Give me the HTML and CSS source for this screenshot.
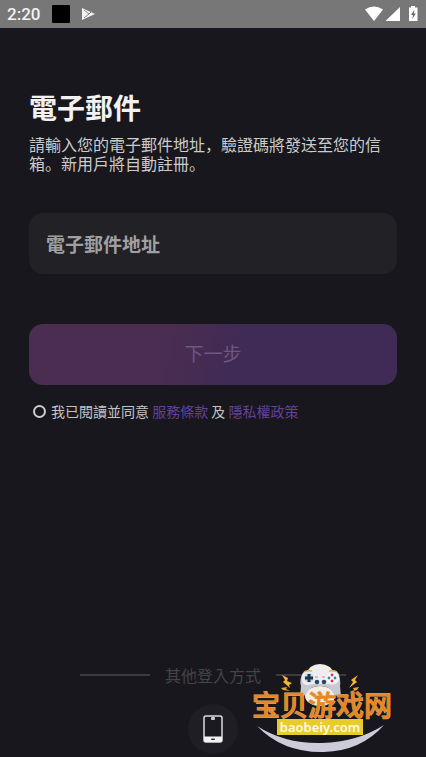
FILE: index.html
```html
<!DOCTYPE html>
<html lang="zh-Hant">
<head>
<meta charset="UTF-8" />
<meta name="viewport" content="width=device-width, initial-scale=1" />
<title>電子郵件</title>
<link rel="stylesheet" href="styles.css">
</head>
<body>

<div class="statusbar">
  <span class="time">2:20</span>
  <span class="app-square"></span>
  <svg class="play" width="14" height="14" viewBox="0 0 14 14">
    <path d="M1 1 L14 7 L1 13 Z" fill="#f2f2f2"/>
    <path d="M3 3 L8 7 L3 11 M8 7 L11 4" stroke="#888" stroke-width="1" fill="none"/>
  </svg>
  <svg class="signals" width="54" height="18" viewBox="0 0 54 18">
    <path d="M0 4.500 Q9 -1.500 18 4.500 L9 16 Z" fill="#fff"/>
    <path d="M35 2 V16 H20.500 Z" fill="#fff"/>
    <path d="M46 1 H50 V2.500 H52.500 V16 H44 V2.500 H46 Z" fill="#fff"/>
    <path d="M49.500 4.500 L46 10 H48 L47.300 14 L50.800 8.500 H48.700 Z" fill="#666"/>
  </svg>
</div>

<main class="content">
  <h1>電子郵件</h1>
  <p class="intro" lang="zh-Hans">請輸入您的電子郵件地址，驗證碼將發送至您的信<br>箱。新用戶將自動註冊。</p>

  <form class="login">
    <input class="email" type="email" placeholder="電子郵件地址" aria-label="電子郵件地址" />
    <button class="next" type="button">下一步</button>
    <div class="agree">
      <input type="radio" id="agree" />
      <label for="agree">我已閱讀並同意 <a href="#">服務條款</a> 及 <a href="#">隱私權政策</a></label>
    </div>
  </form>
</main>

<footer class="other">
  <div class="divider">其他登入方式</div>
  <button class="phone" type="button" aria-label="手機">
    <svg width="20" height="28" viewBox="0 0 20 28">
      <rect x="1" y="1" width="18" height="26" rx="2" fill="#1b1a20" stroke="#ddd" stroke-width="1.500"/>
      <path d="M1 21.500 H19 V25 Q19 27 17 27 H3 Q1 27 1 25 Z" fill="#f2f2f2"/>
      <rect x="8" y="2" width="4" height="3" rx="1" fill="#ccc"/>
      <rect x="8" y="23.500" width="4" height="1.500" rx="0.700" fill="#333"/>
    </svg>
  </button>
</footer>

<!-- logo -->
<svg class="logo" width="144" height="96" viewBox="0 0 144 96">
  <!-- gamepad -->
  <path d="M55 14 Q58 3 69 3 Q80 3 84 14 Z" fill="#efede9"/>
  <ellipse cx="69" cy="35" rx="15" ry="10" fill="#f3eee4"/>
  <path d="M52 12 Q56 8 61 11 H78 Q83 8 87 12 Q90 18 89 25 L90 36 Q84 36 80 29 Q77 25 69 25 Q61 25 58 29 Q54 36 49 36 L50 25 Q48 18 52 12 Z" fill="#c9c9d4"/>
  <path d="M52 12 Q56 8 61 11 H78 Q83 8 87 12 Q90 19 86 22 Q82 25 78 23 H61 Q56 25 53 23 Q49 19 52 12 Z" fill="#eeedf2"/>
  <path d="M53 11 Q56 9 61 10 M78 10 Q83 9 86 11" stroke="#d9b34f" stroke-width="1.500" fill="none"/>
  <circle cx="58" cy="17" r="5" fill="#d3dce5"/>
  <path d="M58 13 V21 M54 17 H62" stroke="#173949" stroke-width="3"/>
  <circle cx="81" cy="17" r="5" fill="#fafafc"/>
  <circle cx="81" cy="14" r="1.400" fill="#d34"/>
  <circle cx="81" cy="20" r="1.400" fill="#d34"/>
  <circle cx="78" cy="17" r="1.400" fill="#298ca0"/>
  <circle cx="84" cy="17" r="1.400" fill="#298ca0"/>
  <circle cx="66" cy="21" r="2.300" fill="#284a60"/>
  <circle cx="73" cy="21" r="2.300" fill="#284a60"/>
  <path d="M64 16 H67 M71 16 H74" stroke="#d68091" stroke-width="1.200"/>
  <!-- bolts -->
  <path d="M31 14 L37 17 L36 20 L41 22 L38 24 L39 27 L32 21 L34 19 Z" fill="#f2b72f"/>
  <path d="M107 14 L100 19 L102 21 L98 27 L106 21 L104 19 Z" fill="#f2b72f"/>
  <path d="M30 27 L36 26 L35 28 L39 30 L32 29 Z M108 26 L102 27 L103 29 L99 31 L106 29 Z" fill="#e8a52f"/>
  <!-- smile and name -->
  <path d="M6 65 Q34 83 71 82 Q106 81 133 64 Q110 90 73 91 Q32 92 6 65 Z" fill="#cbcbda"/>
  <rect x="26" y="58" width="86" height="16" fill="#e8cb2c"/>
  <text class="logo-name" x="71" y="55" text-anchor="middle">宝贝游戏网</text>
  <text class="logo-url" x="69" y="71" text-anchor="middle">baobeiy.com</text>
</svg>

</body>
</html>
```
FILE: styles.css
```css
* {
  box-sizing: border-box;
}
body {
  position: relative;
  display: flex;
  flex-direction: column;
  min-height: 100vh;
  margin: 0;
  background: #18171d;
  color: #f2f2f2;
  font-family: "Noto Sans CJK TC", sans-serif;
}
.statusbar {
  display: flex;
  align-items: center;
  height: 28px;
  padding: 0 7px;
  background: #777;
}
.time {
  font-family: Roboto, sans-serif;
  font-size: 17px;
  font-weight: 500;
}
.app-square {
  width: 18px;
  height: 18px;
  margin: 0 11px 0 12px;
  border-radius: 1px;
  background: #000;
}
.signals {
  margin-left: auto;
}
.content {
  padding: 60px 29px 0;
}
h1 {
  margin: 0;
  font-size: 28px;
  font-weight: 700;
  line-height: 38px;
}
.intro {
  margin: 9px 0 0;
  color: #ccc;
  font-family: "Noto Sans CJK SC", sans-serif;
  font-size: 16px;
  line-height: 19px;
  white-space: nowrap;
}
.login {
  display: flex;
  flex-direction: column;
  margin-top: 40px;
}
.email,
.next {
  width: 100%;
  height: 61px;
  border: none;
  border-radius: 14px;
  font-family: inherit;
  font-size: 19px;
}
.email {
  padding: 0 17px;
  background: #222126;
  color: #eee;
  font-weight: 700;
}
.email::placeholder {
  color: #a0a0a2;
  opacity: 1;
}
.next {
  margin-top: 50px;
  padding: 0 0 4px;
  background: linear-gradient(105deg, #4a2d50 38%, #3f2b55 56%);
  color: #705680;
}
.agree {
  display: flex;
  align-items: center;
  gap: 5px;
  margin-top: 16px;
  padding-left: 4px;
  color: #c4c4c6;
  font-size: 14px;
  line-height: 20px;
}
.agree input {
  appearance: none;
  width: 13px;
  height: 13px;
  margin: 0;
  border: 2px solid #ccc;
  border-radius: 50%;
}
.agree input:checked {
  background: #63429a;
}
.agree a {
  color: #63429a;
  text-decoration: none;
}
.other {
  display: flex;
  flex-direction: column;
  align-items: center;
  gap: 17px;
  margin-top: auto;
  padding: 0 80px 3px;
}
.divider {
  display: flex;
  align-items: center;
  gap: 15px;
  width: 100%;
  color: #444348;
  font-size: 16px;
  line-height: 24px;
}
.divider::before,
.divider::after {
  content: "";
  flex: 1;
  height: 2px;
  background: #3c3b40;
}
.phone {
  display: flex;
  align-items: center;
  justify-content: center;
  width: 50px;
  height: 50px;
  padding: 0;
  border: none;
  border-radius: 50%;
  background: #1f1e24;
}
.logo {
  position: absolute;
  right: 31px;
  bottom: 0;
}
.logo-name {
  fill: #e6871f;
  stroke: #e3a768;
  stroke-width: 1px;
  paint-order: stroke;
  font-family: "Noto Sans CJK SC", sans-serif;
  font-size: 28px;
  font-weight: 500;
}
.logo-url {
  fill: #fffbe0;
  font-family: "Noto Sans", sans-serif;
  font-size: 13px;
  font-weight: 600;
}
```
